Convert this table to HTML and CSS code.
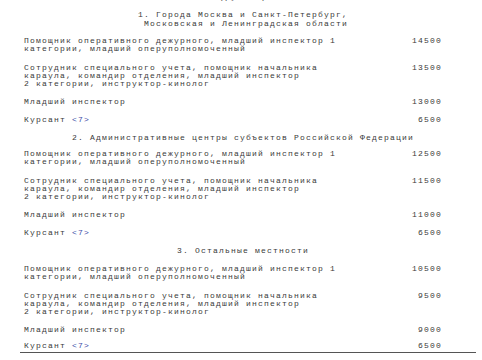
FILE: index.html
```html
<!DOCTYPE html>
<html lang="ru">
<head>
<meta charset="utf-8">
<title>Оклады</title>
<link rel="stylesheet" href="styles.css">
</head>
<body>
<div class="doc">
  <div class="cut">(рублей)</div>

  <div class="head head-first">1. Города Москва и Санкт-Петербург,<br>&nbsp;Московская и Ленинградская области</div>
  <div class="row row-wide"><div class="name">Помощник оперативного дежурного, младший инспектор 1<br>категории, младший оперуполномоченный</div><div class="sum">14500</div></div>
  <div class="row"><div class="name">Сотрудник специального учета, помощник начальника<br>караула, командир отделения, младший инспектор<br>2 категории, инструктор-кинолог</div><div class="sum">13500</div></div>
  <div class="row"><div class="name">Младший инспектор</div><div class="sum">13000</div></div>
  <div class="row"><div class="name">Курсант <span class="ref">&lt;7&gt;</span></div><div class="sum">6500</div></div>

  <div class="head">2. Административные центры субъектов Российской Федерации</div>
  <div class="row row-wide"><div class="name">Помощник оперативного дежурного, младший инспектор 1<br>категории, младший оперуполномоченный</div><div class="sum">12500</div></div>
  <div class="row"><div class="name">Сотрудник специального учета, помощник начальника<br>караула, командир отделения, младший инспектор<br>2 категории, инструктор-кинолог</div><div class="sum">11500</div></div>
  <div class="row"><div class="name">Младший инспектор</div><div class="sum">11000</div></div>
  <div class="row"><div class="name">Курсант <span class="ref">&lt;7&gt;</span></div><div class="sum">6500</div></div>

  <div class="head head-last">3. Остальные местности</div>
  <div class="row row-wide"><div class="name">Помощник оперативного дежурного, младший инспектор 1<br>категории, младший оперуполномоченный</div><div class="sum">10500</div></div>
  <div class="row"><div class="name">Сотрудник специального учета, помощник начальника<br>караула, командир отделения, младший инспектор<br>2 категории, инструктор-кинолог</div><div class="sum">9500</div></div>
  <div class="row row-tight"><div class="name">Младший инспектор</div><div class="sum">9000</div></div>
  <div class="row row-last"><div class="name">Курсант <span class="ref">&lt;7&gt;</span></div><div class="sum">6500</div></div>
</div>
</body>
</html>
```
FILE: styles.css
```css
html, body {
  margin: 0;
  padding: 0;
  background: #ffffff;
}

body {
  overflow: hidden;
  height: 360px;
}

.doc {
  margin-left: 20px;
  width: 456px;
  font-family: "Liberation Mono", "Courier New", monospace;
  font-size: 8px;
  letter-spacing: 1.2px;
  line-height: 8px;
  color: #3a3a3a;
  border-bottom: 1px solid #555555;
  padding-bottom: 2px;
}

.cut {
  margin-top: -7px;
  height: 8px;
  text-align: center;
  padding-right: 10px;
}

.head {
  text-align: center;
  padding-right: 10px;
  margin-top: 7px;
  margin-bottom: 8px;
}

.head-first {
  margin-top: 9px;
  line-height: 9px;
  margin-bottom: 9px;
}

.head-last {
  margin-bottom: 10px;
}

.row {
  display: grid;
  grid-template-columns: 1fr auto;
  padding-left: 4px;
  padding-right: 34px;
  margin-bottom: 10px;
}

.row-wide {
  margin-bottom: 11px;
}

.row-tight {
  margin-bottom: 8px;
}

.row-last {
  margin-bottom: 0;
}

.sum {
  text-align: right;
}

.ref {
  color: #3b4aa8;
}
```
